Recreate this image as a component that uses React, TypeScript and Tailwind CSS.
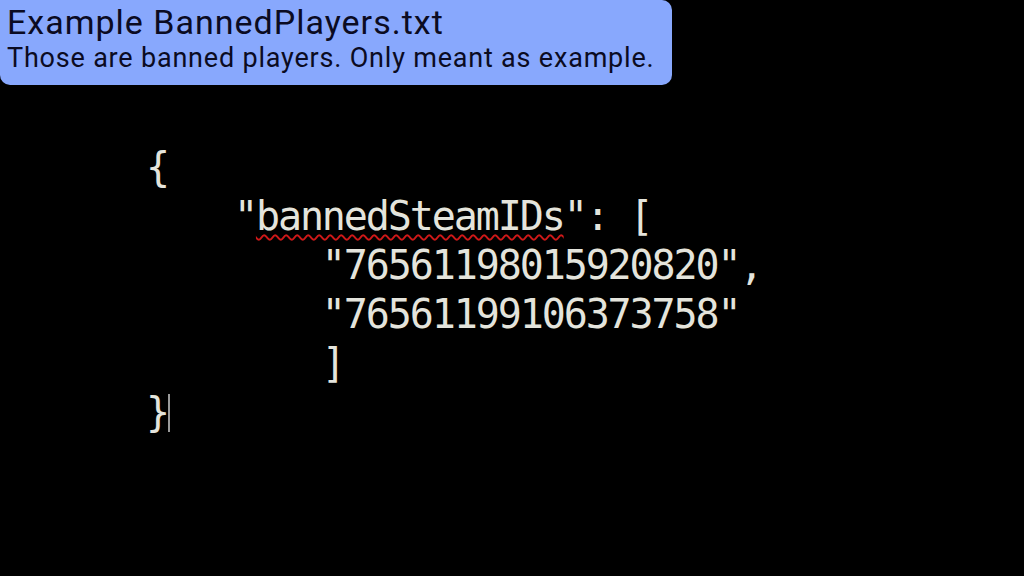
export default function App() {
  const code = "font-['DejaVu_Sans_Mono','Liberation_Mono',monospace]";
  return (
    <div className="w-[1024px] h-[576px] bg-black overflow-hidden">
      <div className="w-[672px] h-[85px] bg-[#88a8fd] rounded-tr-[10px] rounded-br-[10px] rounded-bl-[10px] px-[7px] pt-[2px] text-[#0b0b22] font-['Roboto','Noto_Sans',sans-serif]">
        <div className="text-[34px] leading-[40px] tracking-[1px] whitespace-nowrap">Example BannedPlayers.txt</div>
        <div className="text-[27px] leading-[32px] tracking-[0.8px] whitespace-nowrap">Those are banned players. Only meant as example.</div>
      </div>
      <div className={`${code} mt-[58px] pl-[146px] text-[40px] leading-[49px] tracking-[-2.1px] text-[#e4e4dc] whitespace-pre`}>
        <div>{"{"}</div>
        <div>
          {"    \""}
          <span className="underline decoration-wavy decoration-[#d01818] decoration-[2px] underline-offset-[4px]">bannedSteamIDs</span>
          {"\": ["}
        </div>
        <div>{"        \"76561198015920820\","}</div>
        <div>{"        \"76561199106373758\""}</div>
        <div>{"        ]"}</div>
        <div className="flex items-center">
          <span>{"}"}</span>
          <span className="w-[2px] h-[38px] bg-[#9a9a9a]"></span>
        </div>
      </div>
    </div>
  );
}
